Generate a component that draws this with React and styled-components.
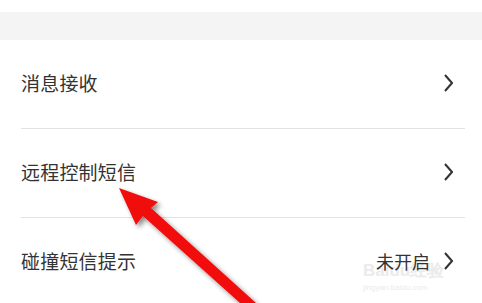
import React from "react";
import styled, { createGlobalStyle } from "styled-components";

const GlobalStyle = createGlobalStyle`
  html, body {
    margin: 0;
    padding: 0;
    background: #fff;
  }
  body {
    font-family: "Noto Sans CJK SC", "Noto Sans", sans-serif;
    color: #333;
    overflow: hidden;
  }
`;

const Page = styled.div`
  position: relative;
  width: 482px;
  height: 303px;
  overflow: hidden;
  background: #fff;
  padding-top: 12px;
  box-sizing: border-box;
`;

const Band = styled.div`
  height: 28px;
  background: #f4f4f4;
`;

const List = styled.div`
  position: relative;
  z-index: 1;
  margin: 0 17px 0 21px;
`;

const Row = styled.div`
  display: flex;
  align-items: center;
  justify-content: space-between;
  height: 85px;
  padding: 0 12px 3px 0;
  border-bottom: ${(p) => (p.last ? "none" : "1px solid #e2e2e2")};
`;

const Label = styled.span`
  font-size: 19px;
  letter-spacing: 0.2px;
  color: #333;
`;

const Right = styled.div`
  display: flex;
  align-items: center;
  gap: 14px;
`;

const Value = styled.span`
  font-size: 18px;
  color: #333;
`;

const Watermark = styled.div`
  position: absolute;
  z-index: 0;
  left: 363px;
  top: 262px;
  color: #ebebeb;
  font-family: "Liberation Sans", Arial, sans-serif;
  line-height: 1;
  white-space: nowrap;
  pointer-events: none;
`;

const WmBig = styled.div`
  font-size: 17px;
  font-weight: bold;
`;

const WmSmall = styled.div`
  margin-top: 5px;
  font-size: 8px;
`;

const ArrowLayer = styled.svg`
  position: absolute;
  z-index: 2;
  left: 0;
  top: 0;
  pointer-events: none;
`;

const Chevron = () => (
  <svg width="9" height="18" viewBox="0 0 9 18">
    <path d="M1 1 L8 9 L1 17" fill="none" stroke="#333" strokeWidth="2" />
  </svg>
);

const rows = [
  { label: "消息接收" },
  { label: "远程控制短信" },
  { label: "碰撞短信提示", value: "未开启", last: true },
];

export default function App() {
  return (
    <>
      <GlobalStyle />
      <Page>
        <Watermark>
          <WmBig>Baidu经验</WmBig>
          <WmSmall>jingyan.baidu.com</WmSmall>
        </Watermark>
        <Band />
        <List>
          {rows.map((r) => (
            <Row key={r.label} last={r.last}>
              <Label>{r.label}</Label>
              <Right>
                {r.value && <Value>{r.value}</Value>}
                <Chevron />
              </Right>
            </Row>
          ))}
        </List>
        <ArrowLayer width="482" height="303" viewBox="0 0 482 303">
          <defs>
            <filter id="sh" x="-20%" y="-20%" width="140%" height="140%">
              <feGaussianBlur in="SourceAlpha" stdDeviation="2.5" />
              <feOffset dx="3" dy="3" result="b" />
              <feComponentTransfer>
                <feFuncA type="linear" slope="0.45" />
              </feComponentTransfer>
              <feMerge>
                <feMergeNode />
                <feMergeNode in="SourceGraphic" />
              </feMerge>
            </filter>
          </defs>
          <polygon
            points="119,188 158,202 151,208 256,303 240,303 143,216 136,225"
            fill="#f20d0d"
            filter="url(#sh)"
          />
        </ArrowLayer>
      </Page>
    </>
  );
}
